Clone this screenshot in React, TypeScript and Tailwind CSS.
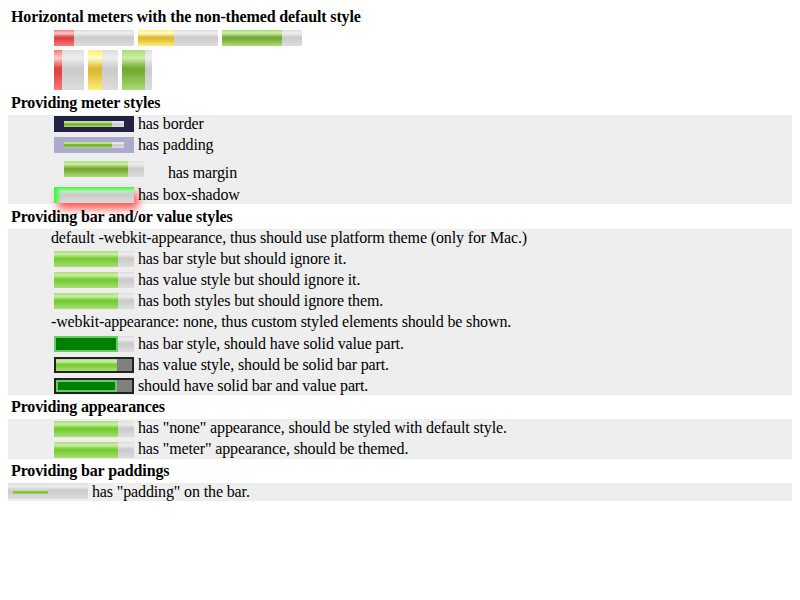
import React from 'react';

const BAR = 'bg-[linear-gradient(#ddd,#eee_20%,#ccc_45%,#ccc_55%,#ddd)]';
const GREEN = 'bg-[linear-gradient(#ad7,#cea_20%,#7a3_45%,#7a3_55%,#ad7)]';
const BRIGHT = 'bg-[linear-gradient(#ad7,#cea_20%,#7c3_45%,#7c3_55%,#ad7)]';
const YELLOW = 'bg-[linear-gradient(#fe7,#ffc_20%,#db3_45%,#db3_55%,#fe7)]';
const RED = 'bg-[linear-gradient(#f77,#fcc_20%,#d44_45%,#d44_55%,#f77)]';
const SOLID = 'bg-[#008000] border-2 border-[#66cc66]';

type MeterProps = { size: string; value: number; fill?: string; bar?: string; className?: string };

const Meter: React.FC<MeterProps> = ({ size, value, fill = GREEN, bar = BAR, className = '' }) => (
  <div className={`flex shrink-0 ${size} ${bar} ${className}`}>
    <div className={`h-full ${fill}`} style={{ width: `${value * 100}%` }} />
  </div>
);

const Heading: React.FC<{ children: React.ReactNode; h: string; pt: string }> = ({ children, h, pt }) => (
  <div className={`${h} ${pt} pl-[11px] font-bold leading-[18px]`}>{children}</div>
);

// row with a meter followed by its label
const Row: React.FC<{ children: React.ReactNode; label: string; h?: string; mt?: string }> = ({
  children,
  label,
  h = 'h-[21px]',
  mt = 'mt-px',
}) => (
  <div className={`flex ${h} pl-[46px]`}>
    <div className={mt}>{children}</div>
    <span className="ml-[4px] leading-[18px] whitespace-nowrap">{label}</span>
  </div>
);

const App: React.FC = () => {
  return (
    <div className="w-[800px] h-[600px] bg-white text-black text-[16px] tracking-[-0.13px] font-['Liberation_Serif',serif]">
      <Heading h="h-[30px]" pt="pt-[8px]">Horizontal meters with the non-themed default style</Heading>
      <div className="flex h-[20px] gap-[4px] pl-[54px]">
        <Meter size="w-[80px] h-4" value={0.25} fill={RED} />
        <Meter size="w-[80px] h-4" value={0.45} fill={YELLOW} />
        <Meter size="w-[80px] h-4" value={0.75} />
      </div>
      <div className="flex h-[40px] gap-[4px] pl-[54px]">
        <Meter size="w-[30px] h-[40px]" value={0.25} fill={RED} />
        <Meter size="w-[30px] h-[40px]" value={0.45} fill={YELLOW} />
        <Meter size="w-[30px] h-[40px]" value={0.75} />
      </div>

      <Heading h="h-[25px]" pt="pt-[4px]">Providing meter styles</Heading>
      <div className="mx-2 h-[89px] bg-[#eeeeee]">
        <Row label="has border">
          <div className="w-[80px] h-4 bg-[#222244] px-[10px] py-[5px]">
            <Meter size="w-full h-[6px]" value={0.8} />
          </div>
        </Row>
        <Row label="has padding">
          <div className="w-[80px] h-4 bg-[#aaaacc] px-[10px] py-[5px]">
            <Meter size="w-full h-[6px]" value={0.8} />
          </div>
        </Row>
        <div className="flex h-[29px] pl-[56px]">
          <div className="mt-[4px]">
            <Meter size="w-[80px] h-4" value={0.8} />
          </div>
          <span className="ml-[24px] mt-[7px] leading-[18px]">has margin</span>
        </div>
        <Row label="has box-shadow" h="h-[18px]">
          <Meter
            size="w-[80px] h-4"
            value={0}
            className="shadow-[inset_4px_3px_4px_#33ff33,4px_6px_8px_#ff5555]"
          />
        </Row>
      </div>

      <Heading h="h-[25px]" pt="pt-[4px]">Providing bar and/or value styles</Heading>
      <div className="mx-2 h-[166px] bg-[#eeeeee]">
        <div className="h-[21px] pl-[43px] leading-[18px]">
          default -webkit-appearance, thus should use platform theme (only for Mac.)
        </div>
        <Row label="has bar style but should ignore it.">
          <Meter size="w-[80px] h-4" value={0.8} fill={BRIGHT} />
        </Row>
        <Row label="has value style but should ignore it.">
          <Meter size="w-[80px] h-4" value={0.8} fill={BRIGHT} />
        </Row>
        <Row label="has both styles but should ignore them.">
          <Meter size="w-[80px] h-4" value={0.8} fill={BRIGHT} />
        </Row>
        <div className="h-[22px] pl-[43px] leading-[18px]">
          -webkit-appearance: none, thus custom styled elements should be shown.
        </div>
        <Row label="has bar style, should have solid value part.">
          <Meter size="w-[80px] h-4" value={0.8} fill={SOLID} />
        </Row>
        <Row label="has value style, should be solid bar part.">
          <Meter size="w-[80px] h-4" value={0.8} bar="bg-[#808080] border-2 border-[#222222]" fill={BRIGHT} />
        </Row>
        <Row label="should have solid bar and value part.">
          <Meter size="w-[80px] h-4" value={0.8} bar="bg-[#808080] border-2 border-[#222222]" fill={SOLID} />
        </Row>
      </div>

      <Heading h="h-[24px]" pt="pt-[3px]">Providing appearances</Heading>
      <div className="mx-2 h-[40px] bg-[#eeeeee]">
        <Row label={'has "none" appearance, should be styled with default style.'} mt="mt-[2px]">
          <Meter size="w-[80px] h-4" value={0.8} fill={BRIGHT} />
        </Row>
        <Row label={'has "meter" appearance, should be themed.'} h="h-[19px]" mt="mt-[2px]">
          <Meter size="w-[80px] h-4" value={0.8} fill={BRIGHT} />
        </Row>
      </div>

      <Heading h="h-[24px]" pt="pt-[3px]">Providing bar paddings</Heading>
      <div className="mx-2 flex h-[18px] bg-[#eeeeee]">
        <div className={`w-[80px] h-4 shrink-0 ${BAR} pl-[5px] pr-[5px] pt-[7px] pb-[5px]`}>
          <div className={`h-full ${GREEN}`} style={{ width: '50%' }} />
        </div>
        <span className="ml-[4px] leading-[18px]">has "padding" on the bar.</span>
      </div>
    </div>
  );
};

export default App;
